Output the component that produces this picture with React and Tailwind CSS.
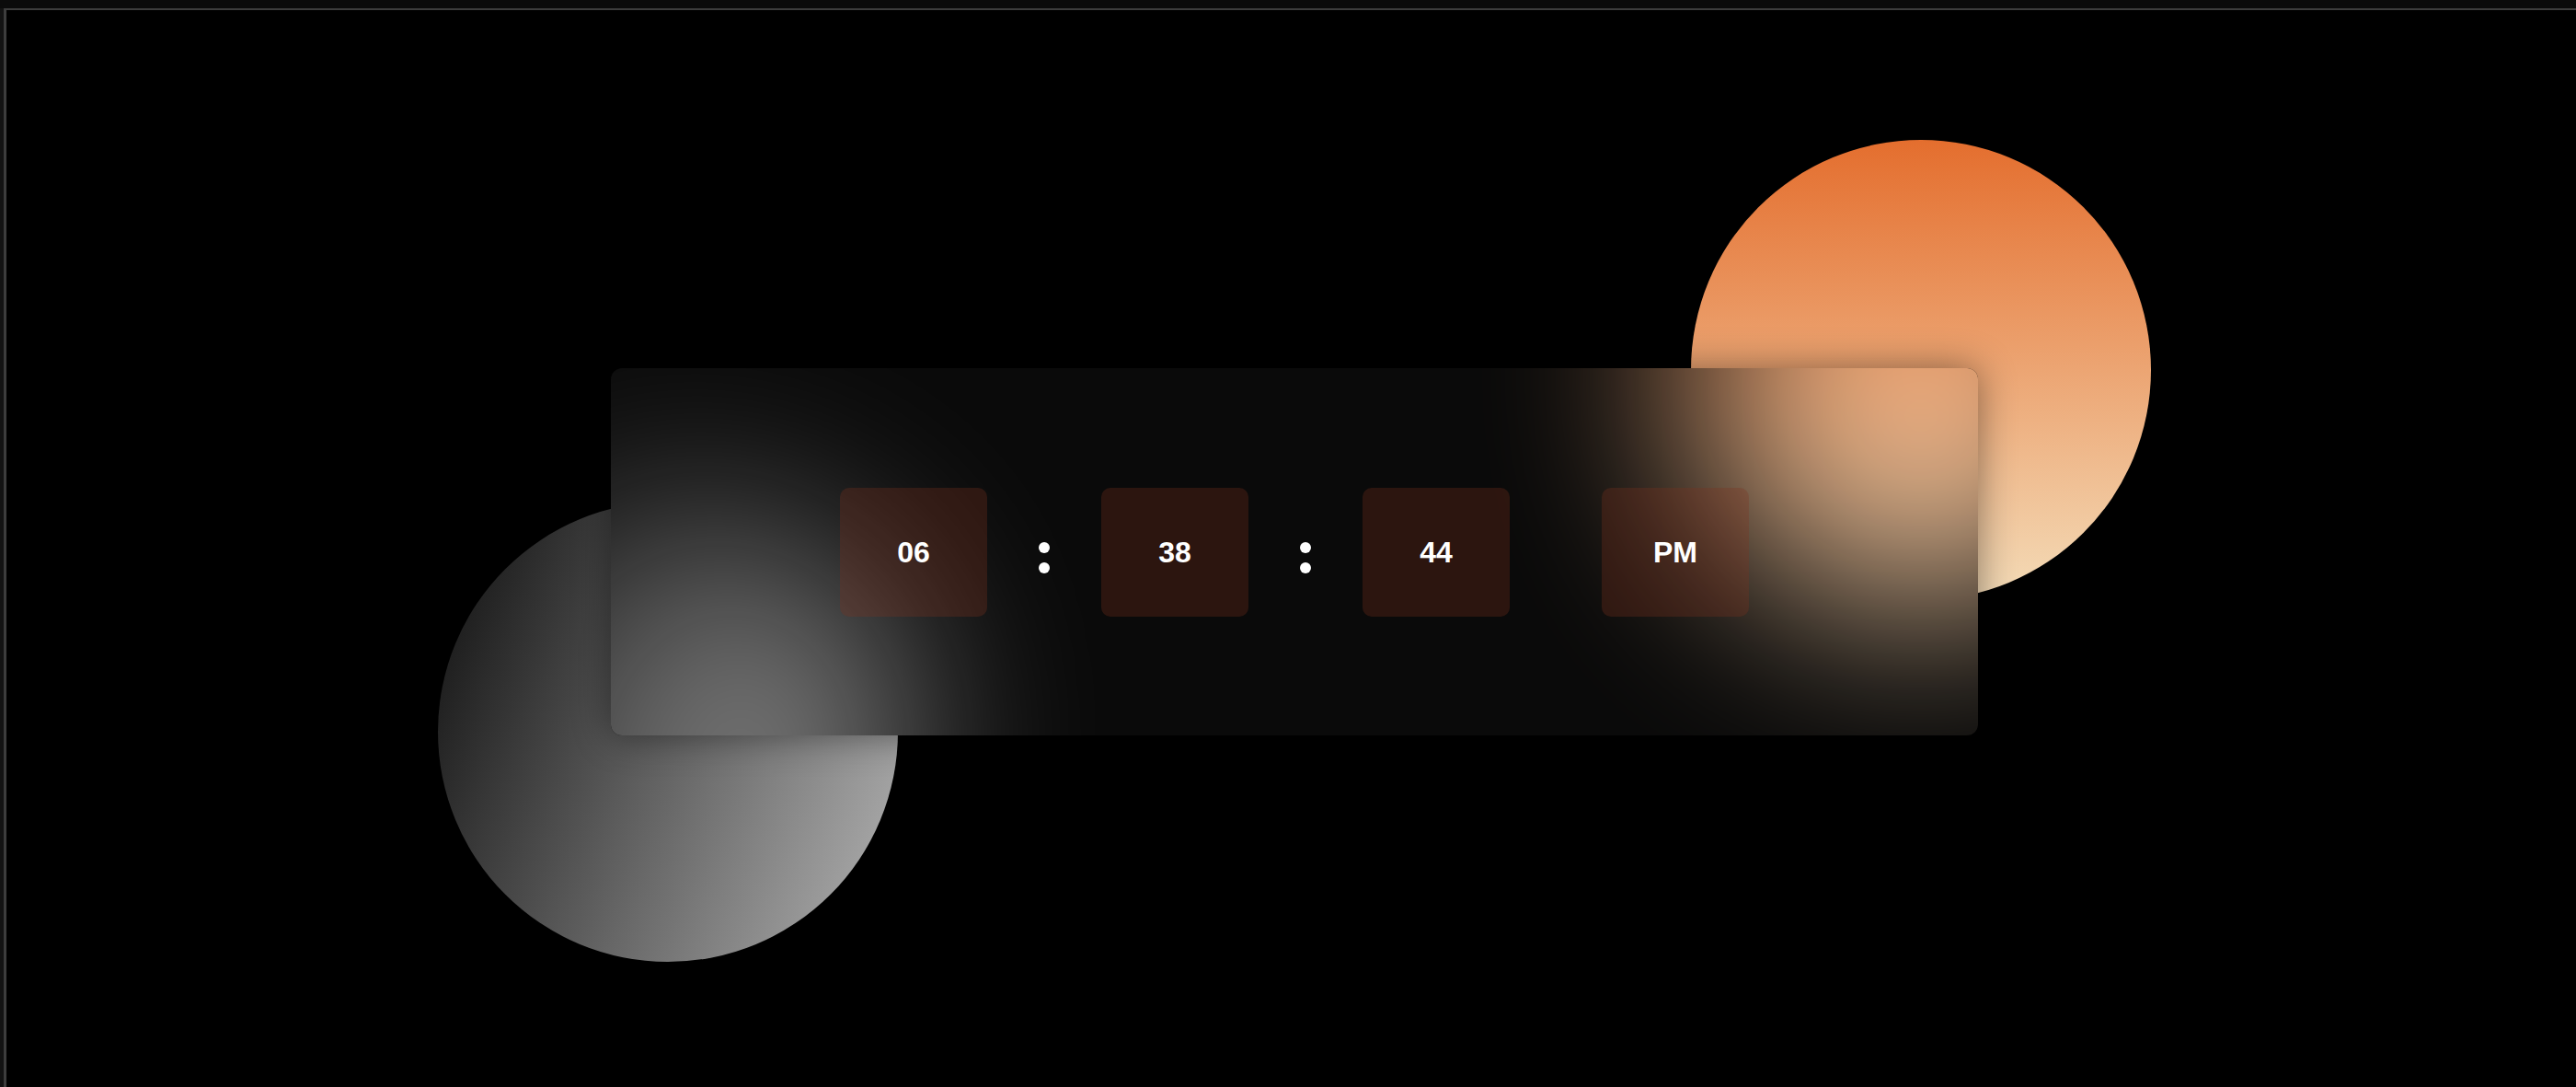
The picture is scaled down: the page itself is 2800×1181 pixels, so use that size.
const Box = ({ children }) => (
  <div className="flex h-[140px] w-[160px] items-center justify-center rounded-[10px] bg-[#7d321f]/30 text-[32px] font-bold text-white">
    {children}
  </div>
);

const Colon = () => (
  <div className="mx-14 mt-3 flex flex-col gap-[10px]">
    <span className="block h-3 w-3 rounded-full bg-white" />
    <span className="block h-3 w-3 rounded-full bg-white" />
  </div>
);

const orange = "h-[500px] w-[500px] rounded-full bg-[linear-gradient(to_bottom,#e46e2e,#f4dcb8)]";
const gray = "h-[500px] w-[500px] rounded-full bg-[linear-gradient(110deg,#0e0e0e,#b4b4b4)]";

export default function App() {
  return (
    <div className="flex h-screen w-full flex-col bg-[#0b0b0b] pt-[9px] font-['Liberation_Sans',Arial,sans-serif]">
      <div className="flex flex-1">
        <div className="w-[4px] bg-[#131313]" />
        <main className="flex flex-1 items-center justify-center overflow-hidden border-l-[3px] border-t-2 border-[#3d3d3d] bg-black pl-[7px] pt-[7px]">
          <div className="relative isolate h-[399px] w-[1486px] shrink-0">
            {/* decorative blobs behind the glass card */}
            <div className={`absolute left-[1174px] top-[-248px] z-0 ${orange}`} />
            <div className={`absolute left-[-188px] top-[145px] z-0 ${gray}`} />

            <div className="relative z-10 h-full w-full rounded-xl shadow-[0_0_40px_rgba(0,0,0,0.45)]">
              {/* frosted glass: blurred copy of the blobs, clipped to the card */}
              <div className="absolute inset-0 overflow-hidden rounded-xl bg-black">
                <div className={`absolute left-[1174px] top-[-248px] blur-[110px] ${orange}`} />
                <div className={`absolute left-[-188px] top-[145px] blur-[110px] ${gray}`} />
                <div className="absolute inset-0 bg-white/[0.04]" />
              </div>

              <div className="relative flex h-full w-full items-center justify-center">
                <Box>06</Box>
                <Colon />
                <Box>38</Box>
                <Colon />
                <Box>44</Box>
                <div className="ml-[100px]">
                  <Box>PM</Box>
                </div>
              </div>
            </div>
          </div>
        </main>
      </div>
    </div>
  );
}
